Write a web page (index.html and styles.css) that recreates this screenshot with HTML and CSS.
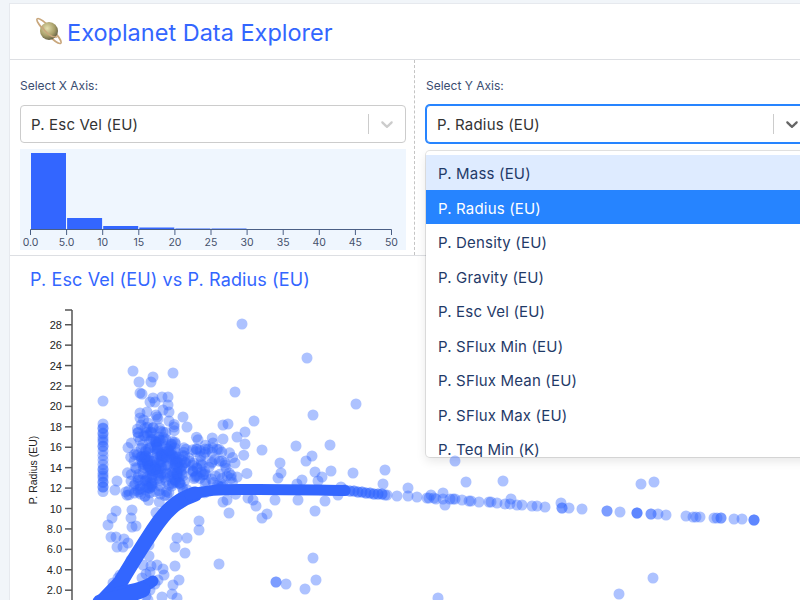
FILE: index.html
```html
<!DOCTYPE html>
<html lang="en">
<head>
  <meta charset="UTF-8" />
  <title>Exoplanet Data Explorer</title>
  <link rel="stylesheet" href="styles.css">
</head>
<body>

<div class="app">
  <!-- Title bar -->
  <div class="title-bar">
    <svg class="planet" viewBox="0 0 34 30" width="34" height="30">
      <defs>
        <radialGradient id="planetFill" cx="0.4" cy="0.35" r="0.75">
          <stop offset="0" stop-color="#e4dfae"/>
          <stop offset="0.55" stop-color="#a9a06a"/>
          <stop offset="1" stop-color="#4d4a38"/>
        </radialGradient>
      </defs>
      <ellipse cx="17" cy="15" rx="17" ry="3.4" transform="rotate(46 17 15)" fill="none" stroke="#c9a77c" stroke-width="1.6"/>
      <circle cx="17" cy="15" r="9" fill="url(#planetFill)"/>
      <path d="M9.500 10 C 13 16, 19 22, 25 21" fill="none" stroke="#c9a77c" stroke-width="1.5"/>
    </svg>
    <h1>Exoplanet Data Explorer</h1>
  </div>

  <!-- Axis pickers -->
  <div class="controls">
    <div class="control-col x-col">
      <label>Select X Axis:</label>
      <div class="select">
        <span class="select-value">P. Esc Vel (EU)</span>
        <span class="select-sep"></span>
        <svg class="chevron" viewBox="0 0 20 20" width="20" height="20"><path d="M4.516 7.548c0.436-0.446 1.043-0.481 1.576 0l3.908 3.747 3.908-3.747c0.533-0.481 1.141-0.446 1.574 0 0.436 0.445 0.408 1.197 0 1.615-0.406 0.418-4.695 4.502-4.695 4.502-0.217 0.223-0.502 0.335-0.787 0.335s-0.57-0.112-0.789-0.335c0 0-4.287-4.084-4.695-4.502s-0.436-1.17 0-1.615z"/></svg>
      </div>
      <div class="histogram">
        <svg id="histogram" viewBox="20 149 386 101" width="386" height="101"></svg>
      </div>
    </div>

    <div class="control-col">
      <label>Select Y Axis:</label>
      <div class="select focused">
        <span class="select-value">P. Radius (EU)</span>
        <span class="select-sep"></span>
        <svg class="chevron" viewBox="0 0 20 20" width="20" height="20"><path d="M4.516 7.548c0.436-0.446 1.043-0.481 1.576 0l3.908 3.747 3.908-3.747c0.533-0.481 1.141-0.446 1.574 0 0.436 0.445 0.408 1.197 0 1.615-0.406 0.418-4.695 4.502-4.695 4.502-0.217 0.223-0.502 0.335-0.787 0.335s-0.57-0.112-0.789-0.335c0 0-4.287-4.084-4.695-4.502s-0.436-1.17 0-1.615z"/></svg>
        <div class="menu">
          <div class="option hover">P. Mass (EU)</div>
          <div class="option selected">P. Radius (EU)</div>
          <div class="option">P. Density (EU)</div>
          <div class="option">P. Gravity (EU)</div>
          <div class="option">P. Esc Vel (EU)</div>
          <div class="option">P. SFlux Min (EU)</div>
          <div class="option">P. SFlux Mean (EU)</div>
          <div class="option">P. SFlux Max (EU)</div>
          <div class="option">P. Teq Min (K)</div>
        </div>
      </div>
    </div>
  </div>

  <!-- Scatter plot -->
  <div class="plot">
    <h2>P. Esc Vel (EU) vs P. Radius (EU)</h2>
    <svg id="scatter" viewBox="10 300 790 300" width="790" height="300"></svg>
  </div>
</div>

<script src="chart.js"></script>
</body>
</html>
```

FILE: styles.css
```css
* {
  margin: 0;
  padding: 0;
  box-sizing: border-box;
}

html, body {
  height: 600px;
  overflow: hidden;
}

body {
  background: #f1f5f9;
  font-family: 'Inter', 'Liberation Sans', sans-serif;
  padding: 3px 0 0 9px;
}

.app {
  width: 820px;
  height: 620px;
  background: #fff;
  border-top: 1px solid #e6e9ee;
  border-left: 1px solid #e6e9ee;
}

.title-bar {
  height: 56px;
  display: flex;
  align-items: center;
  padding: 2px 0 0 22px;
  border-bottom: 1px solid #dddfe3;
}

.planet {
  margin: -4px 1px 0 0;
}

h1 {
  font-size: 23.500px;
  font-weight: 400;
  color: #3366ff;
}

.controls {
  display: flex;
  height: 196px;
  border-bottom: 1px solid #dddfe3;
}

.control-col {
  width: 405px;
  padding: 18px 8px 0 10px;
}

.x-col {
  border-right: 1px dashed #c4c4c4;
}

.control-col + .control-col {
  width: 416px;
  padding: 18px 18px 0 11px;
}

label {
  display: block;
  font-size: 12px;
  line-height: 15px;
  color: #3a4d70;
  margin-bottom: 12px;
}

.select {
  position: relative;
  height: 38px;
  display: flex;
  align-items: center;
  background: #fff;
  border: 1px solid #ccc;
  border-radius: 4px;
  padding-left: 10px;
}

.select.focused {
  border-color: #2684ff;
  box-shadow: 0 0 0 1px #2684ff;
}

.select-value {
  flex: 1;
  font-size: 15px;
  letter-spacing: 0.17px;
  color: #333;
}

.select-sep {
  width: 1px;
  height: 20px;
  background: #ccc;
}

.chevron {
  margin: 0 8px;
  fill: #ccc;
}

.focused .chevron {
  fill: #666;
}

.menu {
  position: absolute;
  top: 45px;
  left: -1px;
  width: 400px;
  height: 306px;
  overflow: hidden;
  padding-top: 4px;
  background: #fff;
  border-radius: 4px;
  box-shadow: 0 0 0 1px rgba(0,0,0,0.1), 0 4px 11px rgba(0,0,0,0.1);
}

.option {
  height: 34.5px;
  line-height: 37px;
  padding-left: 12px;
  font-size: 15px;
  letter-spacing: 0.17px;
  color: #1f3a68;
}

.option.hover {
  background: #deebff;
}

.option.selected {
  background: #2684ff;
  color: #fff;
}

.histogram {
  margin-top: 6px;
  height: 101px;
  background: #eff6fe;
}

.histogram svg {
  display: block;
}

.hist-bar {
  fill: #3366ff;
}

.hist-axis {
  stroke: #4a5f85;
  stroke-width: 1;
}

.hist-label {
  font-size: 10.500px;
  fill: #44506b;
  text-anchor: middle;
}

.plot {
  position: relative;
}

h2 {
  font-size: 18px;
  font-weight: 400;
  line-height: 22px;
  letter-spacing: 0.12px;
  color: #3366ff;
  padding: 13px 0 0 20px;
}

#scatter {
  position: absolute;
  top: 44px;
  left: 0;
}

.axis-line {
  stroke: #555;
  stroke-width: 1.500;
}

.tick-label {
  font-family: 'Liberation Sans', sans-serif;
  font-size: 11px;
  fill: #222;
  text-anchor: end;
}

.axis-title {
  font-family: 'Liberation Sans', sans-serif;
  font-size: 10.500px;
  fill: #222;
  text-anchor: middle;
}

.dot {
  fill: #3366ff;
  fill-opacity: 0.4;
}

.trend {
  fill: none;
  stroke: #3366ff;
  stroke-linecap: round;
  stroke-linejoin: round;
}

.trend-flat {
  stroke-width: 11;
}

.trend-rise {
  stroke-width: 15;
}

.trend-low {
  stroke-width: 11;
}
```

FILE: chart.js
```js
const NS = "http://www.w3.org/2000/svg";

function add(parent, tag, attrs, text) {
  const el = document.createElementNS(NS, tag);
  for (const k in attrs) el.setAttribute(k, attrs[k]);
  if (text) el.textContent = text;
  parent.appendChild(el);
  return el;
}

// histogram of the x axis
const hist = document.getElementById("histogram");
const base = 229.5;
const tops = [153, 218, 226, 227.5, 228.5, 228.5];
tops.forEach((top, i) => {
  add(hist, "rect", { class: "hist-bar", x: 31 + i * 36.1, y: top, width: 35, height: base - top });
});
add(hist, "line", { class: "hist-axis", x1: 30.5, y1: base, x2: 391.5, y2: base });
for (let i = 0; i <= 10; i++) {
  const x = 30.5 + i * 36.1;
  add(hist, "line", { class: "hist-axis", x1: x, y1: base, x2: x, y2: 235 });
  const v = i * 5;
  add(hist, "text", { class: "hist-label", x: x, y: 246 }, v < 10 ? v.toFixed(1) : String(v));
}

// scatter plot, points are in page pixels
const plot = document.getElementById("scatter");

add(plot, "line", { class: "axis-line", x1: 72, y1: 310, x2: 72, y2: 600 });
add(plot, "line", { class: "axis-line", x1: 65, y1: 310, x2: 72, y2: 310 });
for (let v = 2; v <= 28; v += 2) {
  const y = 610.6 - v * 10.21;
  add(plot, "line", { class: "axis-line", x1: 65, y1: y, x2: 72, y2: y });
  add(plot, "text", { class: "tick-label", x: 62, y: y + 4 }, v < 10 ? v.toFixed(1) : String(v));
}
add(plot, "text", { class: "axis-title", transform: "translate(37 470) rotate(-90)" }, "P. Radius (EU)");

const points = [
  // scattered above the curve
  [242,324],[307,358],[356,404],[313,415],[254,421],[235,392],[133,371],[153,377],[173,373],[139,382],[151,382],
  [140,393],[142,394],[103,401],[153,398],[162,397],[168,397],[150,402],[155,402],[168,405],[163,410],[169,412],
  [140,413],[147,412],[140,418],[156,415],[157,417],[158,419],[141,425],[148,423],[153,428],[169,421],[174,427],
  [163,432],[183,417],[187,427],[223,425],[228,424],[245,432],[237,437],[223,439],[245,444],[213,443],
  [262,450],[296,446],[330,445],[312,456],[306,461],[280,463],[281,473],[315,472],[322,477],[318,481],[331,471],
  [353,473],[385,470],[302,480],[297,484],[383,484],[408,488],[341,487],[455,461],[466,482],[503,481],[443,493],
  [431,495],[511,499],[641,484],[654,482],[561,503],[278,478],
  // right of the column
  [117,481],[115,490],[131,481],[116,511],[112,518],[108,525],[111,537],[116,537],[117,547],[124,539],[128,543],
  [123,547],[131,518],[132,510],[136,526],[132,527],[149,545],[149,556],[151,566],[157,565],[163,569],[164,575],
  [175,566],[175,547],[177,538],[187,538],[185,553],[199,521],[199,530],[219,564],[229,513],[262,518],[267,514],
  [256,506],[253,500],[173,585],[179,580],[162,597],[177,598],[172,594],[276,582],[276,582],[286,584],
  [235,463],[222,461],[212,462],[203,475],[193,472],[223,502],[227,500],[248,498],[275,500],[298,500],
  [315,511],[325,501],[338,495],[445,505],[313,558],[316,580],[305,589],[438,598],[653,578],[619,594],
  // low cluster
  [113,583],[120,575],[126,570],[131,560],[136,553],[143,565],[146,574],[158,580],[155,584],[150,590],[132,598],
  [118,596],[110,598],[127,592],[140,592],[146,596],[118,578],[112,590],[150,572],[142,578],[148,600],
  // end of the thick band
  [345,490],[350,491],[354,491],[358,492],[362,492],[366,493],[370,493],[374,494],[378,494],[382,494],[385,495],
  [345,490],[350,491],[354,491],[358,492],[362,492],[366,493],[370,493],[374,494],[378,494],[382,494],[387,495],
  // tail of the curve
  [397,496],[408,496],[417,497],[427,498],[429,498],[434,498],[436,499],[443,499],[450,499],[453,499],[455,499],
  [462,500],[469,501],[471,501],[479,502],[489,502],[491,502],[497,503],[505,504],[510,504],[517,505],[522,505],
  [532,506],[537,506],[545,507],[562,508],[562,508],[569,508],[582,509],[607,511],[607,511],[620,512],[637,513],
  [637,513],[637,513],[651,514],[651,514],[658,514],[666,515],[686,516],[693,517],[696,517],[700,517],[714,518],
  [717,518],[721,518],[721,518],[734,519],[742,519],[754,520],[754,520],[754,520]
];

// column of points at the left edge
for (let y = 424; y < 492; y += 4.5) points.push([103, y]);
[428, 434, 440, 446, 470, 476, 482, 487].forEach(y => points.push([103, y]));

// dense cloud, seeded so every run draws the same
let seed = 7;
function rnd() {
  seed = (seed * 16807) % 2147483647;
  return seed / 2147483647;
}
const clouds = [
  [152, 445, 11, 11, 60],
  [174, 462, 12, 14, 75],
  [150, 472, 11, 12, 80],
  [145, 492, 12, 8, 30],
  [208, 456, 14, 10, 36],
  [195, 480, 18, 8, 34],
  [225, 478, 10, 7, 12]
];
clouds.forEach(([cx, cy, sx, sy, n]) => {
  for (let i = 0; i < n; i++) {
    const a = rnd() * Math.PI * 2;
    const r = Math.sqrt(-2 * Math.log(rnd() + 0.001));
    points.push([cx + Math.cos(a) * r * sx, cy + Math.sin(a) * r * sy]);
  }
});

points.forEach(p => add(plot, "circle", { class: "dot", cx: p[0], cy: p[1], r: 5.5 }));

add(plot, "path", { class: "trend trend-rise", d: "M100 604 L 120 583 C 130 566, 140 550, 153 530 C 164 513, 176 500, 195 494" });
add(plot, "path", { class: "trend trend-flat", d: "M190 495 C 205 490, 220 489.500, 240 489.500 C 280 489, 310 490, 345 490.500" });
add(plot, "path", { class: "trend trend-low", d: "M118 592 C 130 590, 145 588, 153 581" });
add(plot, "path", { class: "trend trend-rise", d: "M100 602 C 115 598, 130 596, 143 590" });
```
